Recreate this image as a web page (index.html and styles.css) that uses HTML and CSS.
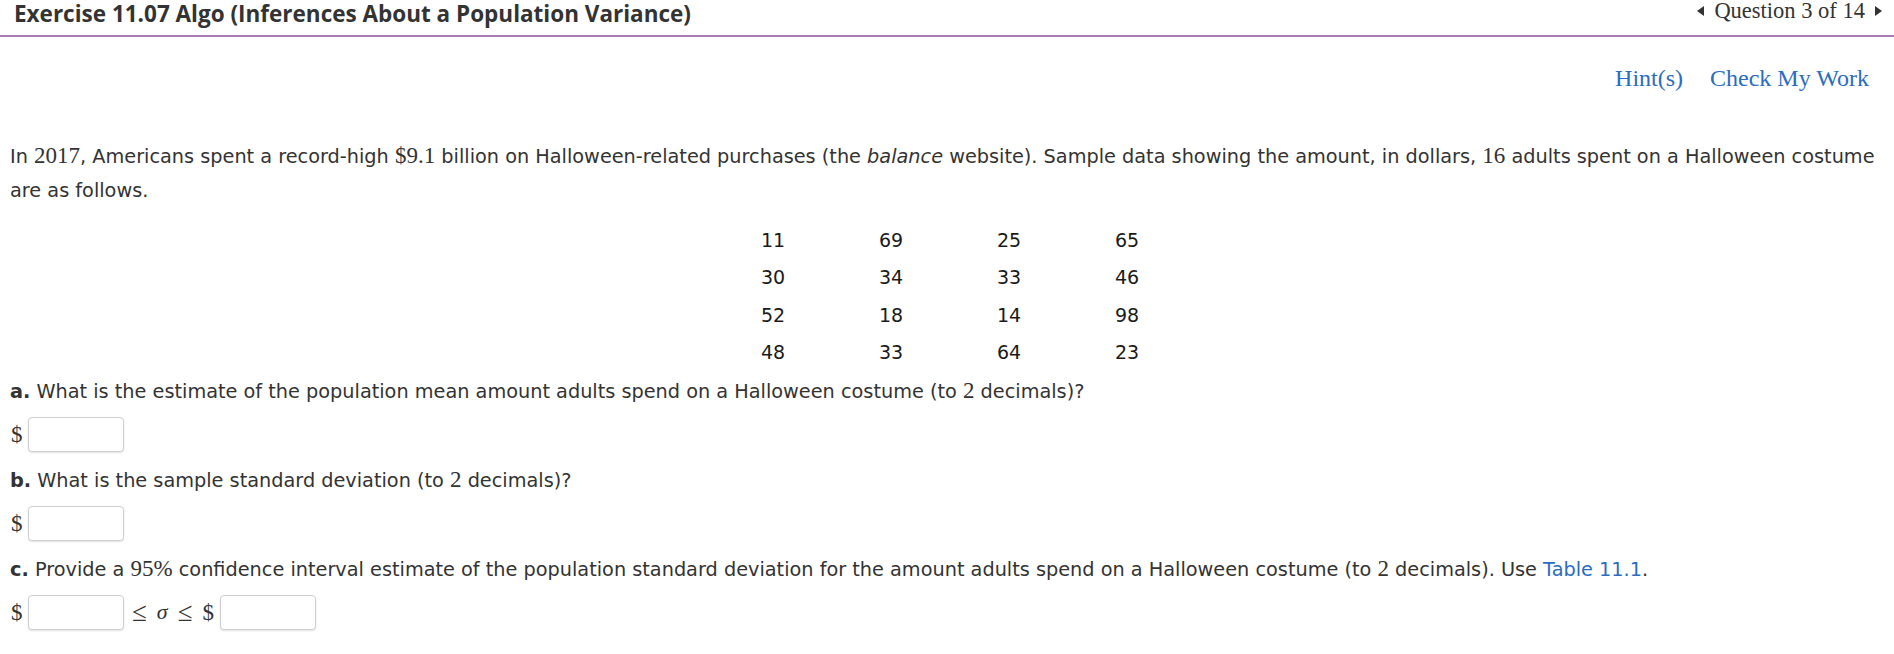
FILE: index.html
```html
<!DOCTYPE html>
<html>
<head>
<meta charset="utf-8">
<link rel="stylesheet" href="styles.css">
</head>
<body>
<header class="topbar">
  <h1 class="title">Exercise 11.07 Algo (Inferences About a Population Variance)</h1>
  <nav class="qnav">
    <span class="tri tri-left"></span>
    <span class="qlabel">Question 3 of 14</span>
    <span class="tri tri-right"></span>
  </nav>
</header>
<div class="tools">
  <a class="tool">Hint(s)</a>
  <a class="tool">Check My Work</a>
</div>
<main class="content">
  <p class="para">In <span class="m">2017</span>, Americans spent a record-high <span class="m">$9.1</span> billion on Halloween-related purchases (the <em>balance</em> website). Sample data showing the amount, in dollars, <span class="m">16</span> adults spent on a Halloween costume <span>are as follows.</span></p>
  <table class="data">
    <tr><td>11</td><td>69</td><td>25</td><td>65</td></tr>
    <tr><td>30</td><td>34</td><td>33</td><td>46</td></tr>
    <tr><td>52</td><td>18</td><td>14</td><td>98</td></tr>
    <tr><td>48</td><td>33</td><td>64</td><td>23</td></tr>
  </table>
  <p class="q"><b>a.</b> What is the estimate of the population mean amount adults spend on a Halloween costume (to <span class="m">2</span> decimals)?</p>
  <div class="ans"><span class="m dol">$</span><span class="box"></span></div>
  <p class="q"><b>b.</b> What is the sample standard deviation (to <span class="m">2</span> decimals)?</p>
  <div class="ans"><span class="m dol">$</span><span class="box"></span></div>
  <p class="q"><b>c.</b> Provide a <span class="m">95%</span> confidence interval estimate of the population standard deviation for the amount adults spend on a Halloween costume (to <span class="m">2</span> decimals). Use <a class="link">Table 11.1</a>.</p>
  <div class="ans"><span class="m dol">$</span><span class="box"></span><span class="m rel"><span class="le">≤</span><i class="sig">σ</i><span class="le">≤</span><span>$</span></span><span class="box"></span></div>
</main>
</body>
</html>
```
FILE: styles.css
```css
html, body {
  margin: 0;
  padding: 0;
  background: #fff;
}
body {
  font-family: "DejaVu Sans", Verdana, sans-serif;
  font-size: 19.3px;
  color: #333;
}
.topbar {
  display: flex;
  justify-content: space-between;
  align-items: center;
  height: 35px;
  border-bottom: 2px solid #a97cb7;
  padding: 0 12px 0 14px;
}
.title {
  margin: 0;
  font-family: "Open Sans", sans-serif;
  font-weight: 700;
  font-size: 22.5px;
  color: #333;
  margin-top: -8px;
}
.qnav {
  display: flex;
  align-items: center;
  gap: 10px;
  margin-top: -14px;
  font-family: "Liberation Serif", serif;
  font-size: 22.5px;
  color: #333;
}
.tri {
  width: 0;
  height: 0;
  border-top: 5.5px solid transparent;
  border-bottom: 5.5px solid transparent;
}
.tri-left { border-right: 7px solid #333; }
.tri-right { border-left: 7px solid #333; }
.tools {
  display: flex;
  justify-content: flex-end;
  gap: 27px;
  padding-right: 25px;
  margin-top: 29px;
  line-height: 24px;
  font-family: "Liberation Serif", serif;
  font-size: 24px;
}
.tool { color: #2a6cc0; }
.content { padding: 0 10px; }
.para {
  margin: 50px 0 0;
  line-height: 34px;
}
.m {
  font-family: "Liberation Serif", serif;
  font-size: 23px;
  line-height: 1;
}
.data {
  margin: 13px auto 0;
  border-collapse: collapse;
  position: relative;
  left: 3px;
}
.data td {
  width: 118px;
  height: 37.5px;
  padding: 0;
  text-align: center;
  color: #1a1a1a;
  font-size: 19px;
}
.q {
  margin: 4px 0 0;
  line-height: 34px;
}
.ans {
  display: flex;
  align-items: center;
  height: 38px;
  margin-top: 6px;
  margin-bottom: 11px;
}
.dol {
  width: 17px;
  padding-left: 1px;
}
.box {
  width: 94px;
  height: 33px;
  border: 1px solid #cfcfcf;
  border-radius: 4px;
  box-shadow: 0 1px 2px rgba(0,0,0,0.12);
  background: #fff;
}
.rel {
  display: flex;
  align-items: center;
  margin: 0 6px 0 8px;
}
.le { margin: 0 10px; font-size: 27px; }
.le:first-child { margin-left: 0; }
.sig { font-size: 22px; }
.link { color: #2a6cc0; }
```
